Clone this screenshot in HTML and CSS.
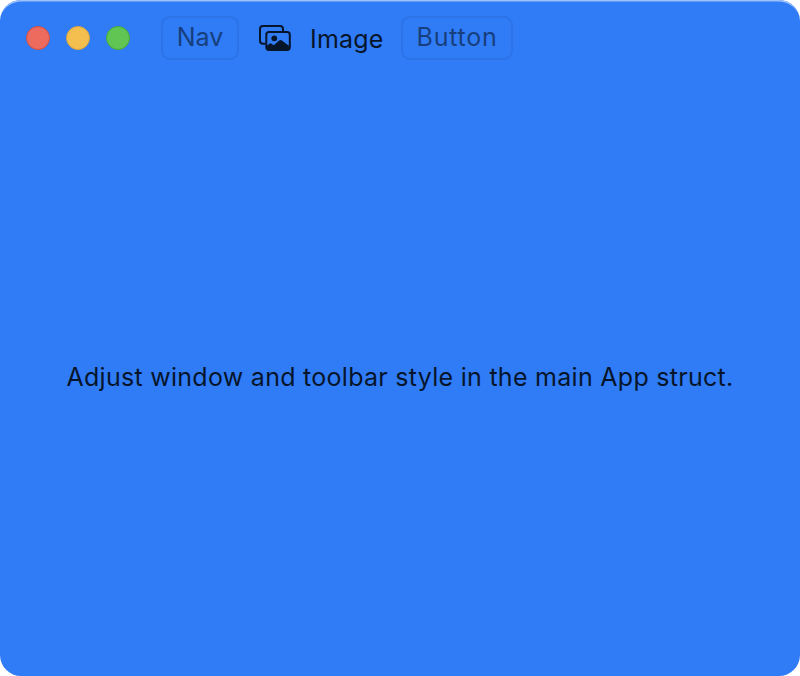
FILE: index.html
```html
<!DOCTYPE html>
<html lang="en">
<head>
<meta charset="utf-8">
<title>Window</title>
<link rel="stylesheet" href="styles.css">
</head>
<body>
<div class="window">
  <header class="toolbar">
    <div class="lights">
      <span class="light close"></span>
      <span class="light minimize"></span>
      <span class="light expand"></span>
    </div>
    <button class="btn nav">Nav</button>
    <svg class="photo" width="34" height="28" viewBox="0 0 34 28" fill="none" stroke="currentColor" stroke-width="2">
      <path d="M7.500 19.800H5a3 3 0 0 1-3-3V5a3 3 0 0 1 3-3h17a3 3 0 0 1 3 3v2.500"/>
      <rect x="8.300" y="8" width="23.500" height="18" rx="2.700"/>
      <circle cx="16.300" cy="14.300" r="2.900" fill="currentColor" stroke="none"/>
      <path d="M8 22.500l3.400-2.700q1.100-.9 2.200 0l2.200 1.500 5.300-4.800q1.400-1.200 2.800 0L31.800 22.500v1a2.700 2.700 0 0 1-2.700 2.700H10.700A2.700 2.700 0 0 1 8 23.500z" fill="currentColor" stroke="none"/>
    </svg>
    <span class="title">Image</span>
    <button class="btn action">Button</button>
  </header>
  <main class="content"><p class="message">Adjust window and toolbar style in the main App struct.</p></main>
</div>
</body>
</html>
```
FILE: styles.css
```css
* { box-sizing: border-box; }
body { margin: 0; background: #fff; font-family: Inter, sans-serif; font-size: 25px; color: #07152b; }
.window {
  height: 676px;
  display: flex;
  flex-direction: column;
  background: #307cf7;
  border-radius: 21px;
  box-shadow: inset 0 2px 0 -0.5px #9cc1fb;
}
.toolbar { height: 76px; display: flex; align-items: center; padding-left: 26px; }
.lights { display: flex; gap: 16px; }
.light { width: 24px; height: 24px; border-radius: 50%; border: 1px solid; }
.close { background: #ec6a5e; border-color: #d04e43; }
.minimize { background: #f4bf4f; border-color: #d6a243; }
.expand { background: #61c554; border-color: #4aa73c; }
.btn {
  height: 44px;
  padding: 0 0 2px;
  border: 2px solid #2c73e7;
  border-radius: 9px;
  background: transparent;
  color: #173f7c;
  font: inherit;
  white-space: nowrap;
}
.nav { width: 78px; margin-left: 31px; }
.photo { margin-left: 19px; flex: none; }
.title { width: 73px; margin: 2px 0 0 18px; letter-spacing: 0.2px; white-space: nowrap; }
.action { width: 112px; margin-left: 18px; letter-spacing: 0.75px; }
.content { flex: 1; display: flex; align-items: center; justify-content: center; }
.message { margin: 0; padding-top: 2px; letter-spacing: 0.28px; white-space: nowrap; }
```
